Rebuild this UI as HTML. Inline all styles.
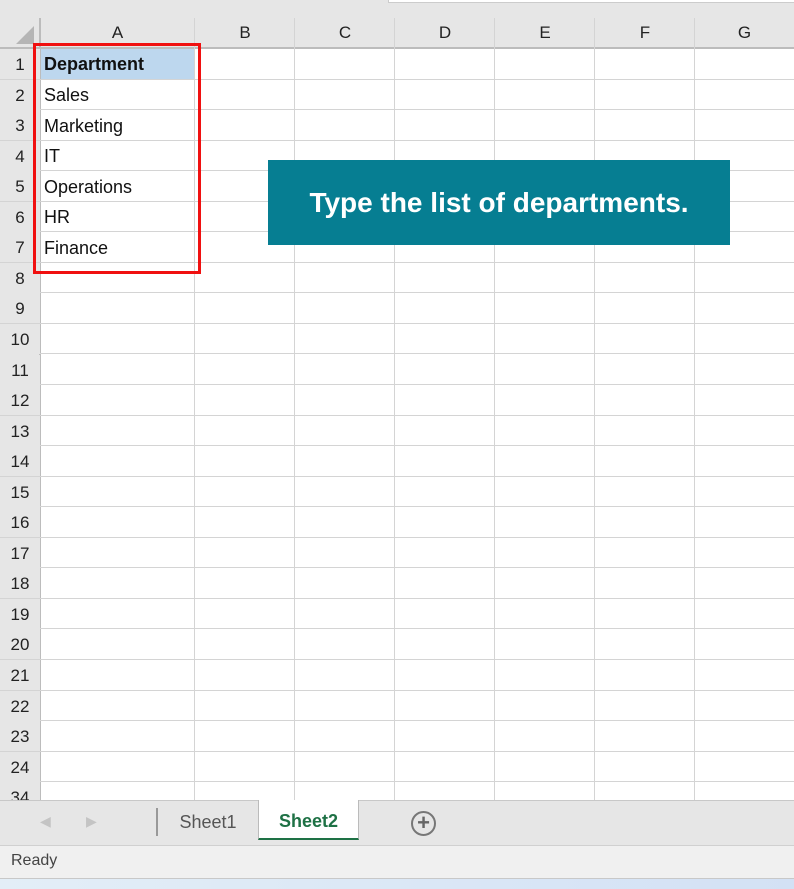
<!DOCTYPE html>
<html><head><meta charset="utf-8"><style>
*{margin:0;padding:0;box-sizing:border-box}
body{width:794px;height:889px;overflow:hidden;background:#fff;font-family:"Liberation Sans",sans-serif;position:relative}
.a{position:absolute}
.hdr{background:#e6e6e6}
.vl{position:absolute;width:1px;background:#d4d4d4}
.hl{position:absolute;height:1px;background:#d4d4d4}
.rn{position:absolute;left:0;width:40px;text-align:center;font-size:17px;color:#222;background:#e6e6e6}
.cl{position:absolute;top:18px;height:30px;line-height:30px;text-align:center;font-size:17px;color:#222}
.ct{position:absolute;left:44px;font-size:18px;color:#111}
</style></head><body>
<div class="a hdr" style="left:0;top:0;width:794px;height:48px"></div>
<div class="a" style="left:388px;top:0;width:406px;height:3px;background:#fff;border-bottom:1px solid #ccc;border-left:1px solid #ccc"></div>
<div class="a hdr" style="left:0;top:48px;width:40px;height:752px"></div>
<div class="a" style="left:16px;top:26px;width:0;height:0;border-left:18px solid transparent;border-bottom:18px solid #b5b5b5"></div>
<div class="a" style="left:0;top:47px;width:794px;height:2px;background:#bcbcbc"></div>
<div class="a" style="left:39px;top:18px;width:2px;height:782px;background:#bcbcbc"></div>
<div class="cl" style="left:40px;width:155px">A</div>
<div class="cl" style="left:195px;width:100px">B</div>
<div class="cl" style="left:295px;width:100px">C</div>
<div class="cl" style="left:395px;width:100px">D</div>
<div class="cl" style="left:495px;width:100px">E</div>
<div class="cl" style="left:595px;width:100px">F</div>
<div class="cl" style="left:695px;width:99px">G</div>
<div class="vl" style="left:194px;top:18px;height:782px"></div>
<div class="vl" style="left:294px;top:18px;height:782px"></div>
<div class="vl" style="left:394px;top:18px;height:782px"></div>
<div class="vl" style="left:494px;top:18px;height:782px"></div>
<div class="vl" style="left:594px;top:18px;height:782px"></div>
<div class="vl" style="left:694px;top:18px;height:782px"></div>
<div class="a" style="left:41px;top:49px;width:153px;height:30px;background:#bdd7ee"></div>
<div id="rows"></div>
<script>
var h='';for(var n=1;n<=25;n++){var t=49+(n-1)*30.55;var lbl=n==25?'34':n;
h+='<div class="hl" style="left:0;width:794px;top:'+(t+29.5)+'px"></div>';
h+='<div class="rn" style="top:'+t+'px;height:30px;line-height:31px">'+lbl+'</div>';}
document.getElementById('rows').innerHTML=h;
</script>
<div class="ct" style="top:54px;font-weight:bold">Department</div>
<div class="ct" style="top:85px">Sales</div>
<div class="ct" style="top:116px">Marketing</div>
<div class="ct" style="top:146px">IT</div>
<div class="ct" style="top:177px">Operations</div>
<div class="ct" style="top:207px">HR</div>
<div class="ct" style="top:238px">Finance</div>
<div class="a" style="left:33px;top:43px;width:168px;height:231px;border:3px solid #f01010"></div>
<div class="a" style="left:268px;top:160px;width:462px;height:85px;background:#067e92;color:#fff;font-weight:bold;font-size:28px;line-height:85px;text-align:center">Type the list of departments.</div>
<div class="a" style="left:0;top:800px;width:794px;height:45px;background:#e6e6e6;border-top:1px solid #c8c8c8"></div>
<div class="a" style="left:40px;top:813px;font-size:14px;color:#c4c4c4">&#9664;</div>
<div class="a" style="left:86px;top:813px;font-size:14px;color:#c4c4c4">&#9654;</div>
<div class="a" style="left:156px;top:808px;width:2px;height:28px;background:#999"></div>
<div class="a" style="left:158px;top:812px;width:100px;text-align:center;font-size:18px;color:#555">Sheet1</div>
<div class="a" style="left:258px;top:800px;width:101px;height:40px;background:#fff;border-left:1px solid #bbb;border-right:1px solid #bbb;border-bottom:2px solid #1e7145"></div>
<div class="a" style="left:258px;top:811px;width:101px;text-align:center;font-size:18px;font-weight:bold;color:#1e7145">Sheet2</div>
<div class="a" style="left:411px;top:811px;width:25px;height:25px;border:2px solid #777;border-radius:50%;text-align:center;line-height:20px;font-size:22px;color:#666;font-weight:bold">+</div>
<div class="a" style="left:0;top:845px;width:794px;height:34px;background:#f0f0f0;border-top:1px solid #d0d0d0;border-bottom:1px solid #c8c8c8"></div>
<div class="a" style="left:11px;top:852px;font-size:16px;color:#444">Ready</div>
<div class="a" style="left:0;top:879px;width:794px;height:10px;background:linear-gradient(90deg,#e3eef7,#d3e1f5)"></div>
</body></html>
